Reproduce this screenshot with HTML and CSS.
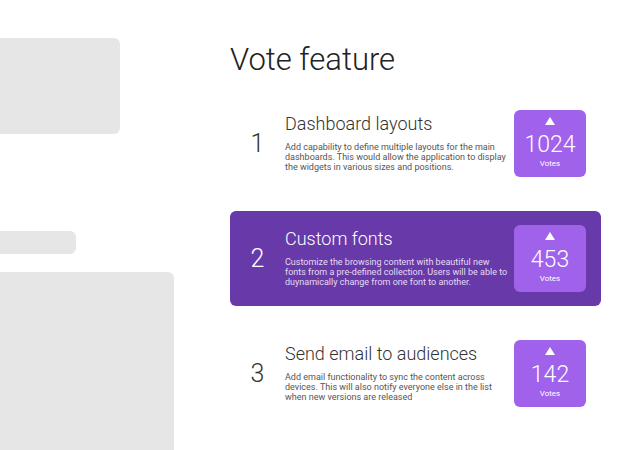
FILE: index.html
```html
<!DOCTYPE html>
<html lang="en">
<head>
    <meta charset="UTF-8">
    <meta name="viewport" content="width=device-width, initial-scale=1.0">
    <title>Vote feature</title>
    <link rel="stylesheet" href="styles.css">
</head>
<body>
    <div class="page">
        <!-- Placeholder sidebar -->
        <aside class="sidebar">
            <div class="ghost ghost-top"></div>
            <div class="ghost ghost-pill"></div>
            <div class="ghost ghost-panel"></div>
        </aside>

        <main class="content">
            <h1 class="page-title">Vote feature</h1>

            <ul class="feature-list">
                <li class="feature">
                    <span class="feature-rank">1</span>
                    <div class="feature-body">
                        <h2 class="feature-title">Dashboard layouts</h2>
                        <p class="feature-desc">Add capability to define multiple layouts for the main dashboards. This would allow the application to display the widgets in various sizes and positions.</p>
                    </div>
                    <button class="vote-box">
                        <svg class="vote-arrow" width="10" height="8" viewBox="0 0 10 8"><polygon points="5,0 10,8 0,8" fill="#fff"/></svg>
                        <span class="vote-count">1024</span>
                        <span class="vote-label">Votes</span>
                    </button>
                </li>

                <li class="feature active">
                    <span class="feature-rank">2</span>
                    <div class="feature-body">
                        <h2 class="feature-title">Custom fonts</h2>
                        <p class="feature-desc">Customize the browsing content with beautiful new fonts from a pre-defined collection. Users will be able to duynamically change from one font to another.</p>
                    </div>
                    <button class="vote-box">
                        <svg class="vote-arrow" width="10" height="8" viewBox="0 0 10 8"><polygon points="5,0 10,8 0,8" fill="#fff"/></svg>
                        <span class="vote-count">453</span>
                        <span class="vote-label">Votes</span>
                    </button>
                </li>

                <li class="feature">
                    <span class="feature-rank">3</span>
                    <div class="feature-body">
                        <h2 class="feature-title">Send email to audiences</h2>
                        <p class="feature-desc">Add email functionality to sync the content across devices. This will also notify everyone else in the list when new versions are released</p>
                    </div>
                    <button class="vote-box">
                        <svg class="vote-arrow" width="10" height="8" viewBox="0 0 10 8"><polygon points="5,0 10,8 0,8" fill="#fff"/></svg>
                        <span class="vote-count">142</span>
                        <span class="vote-label">Votes</span>
                    </button>
                </li>
            </ul>
        </main>
    </div>
</body>
</html>
```

FILE: styles.css
```css
:root {
    --ghost: #e6e6e6;
    --card: #6739a9;
    --vote: #a062ea;
    --text: #333;
    --text-muted: #555;
}

* {
    box-sizing: border-box;
    margin: 0;
    padding: 0;
    font-family: Roboto, 'Noto Sans', sans-serif;
}

body {
    background: #fff;
    height: 450px;
    overflow: hidden;
}

.page {
    display: grid;
    grid-template-columns: 230px 371px;
    height: 100%;
}

/* Skeleton placeholders */
.sidebar {
    display: flex;
    flex-direction: column;
    align-items: flex-start;
}

.ghost {
    background: var(--ghost);
    border-radius: 0 6px 6px 0;
}

.ghost-top {
    width: 120px;
    height: 96px;
    margin-top: 38px;
}

.ghost-pill {
    width: 76px;
    height: 23px;
    margin-top: 97px;
}

.ghost-panel {
    width: 174px;
    height: 200px;
    margin-top: 18px;
}

/* Main list */
.content {
    padding-top: 40px;
}

.page-title {
    font-size: 31px;
    font-weight: 300;
    line-height: 40px;
    color: #222;
    margin-bottom: 16px;
}

.feature-list {
    list-style: none;
    display: flex;
    flex-direction: column;
    gap: 20px;
}

.feature {
    display: flex;
    align-items: center;
    height: 95px;
    padding-right: 15px;
    border-radius: 6px;
    color: var(--text);
}

.feature.active {
    background: var(--card);
    color: #fff;
}

.feature-rank {
    width: 55px;
    text-align: center;
    font-size: 25px;
    font-weight: 300;
}

.feature-body {
    flex: 1;
    padding-right: 5px;
    margin-top: -3px;
}

.feature-title {
    font-size: 18px;
    font-weight: 300;
    line-height: 22px;
    margin-bottom: 7px;
}

.feature-desc {
    font-size: 9px;
    line-height: 10px;
    color: var(--text-muted);
}

.feature.active .feature-desc {
    color: #e6dcf3;
}

.vote-box {
    width: 72px;
    height: 67px;
    border: none;
    border-radius: 6px;
    background: var(--vote);
    color: #fff;
    display: flex;
    flex-direction: column;
    align-items: center;
    padding-top: 7px;
    cursor: pointer;
}

.vote-arrow {
    display: block;
}

.vote-count {
    font-size: 23px;
    font-weight: 300;
    line-height: 26px;
    margin-top: 7px;
}

.vote-label {
    font-size: 8px;
    line-height: 10px;
    margin-top: 1px;
}
```
